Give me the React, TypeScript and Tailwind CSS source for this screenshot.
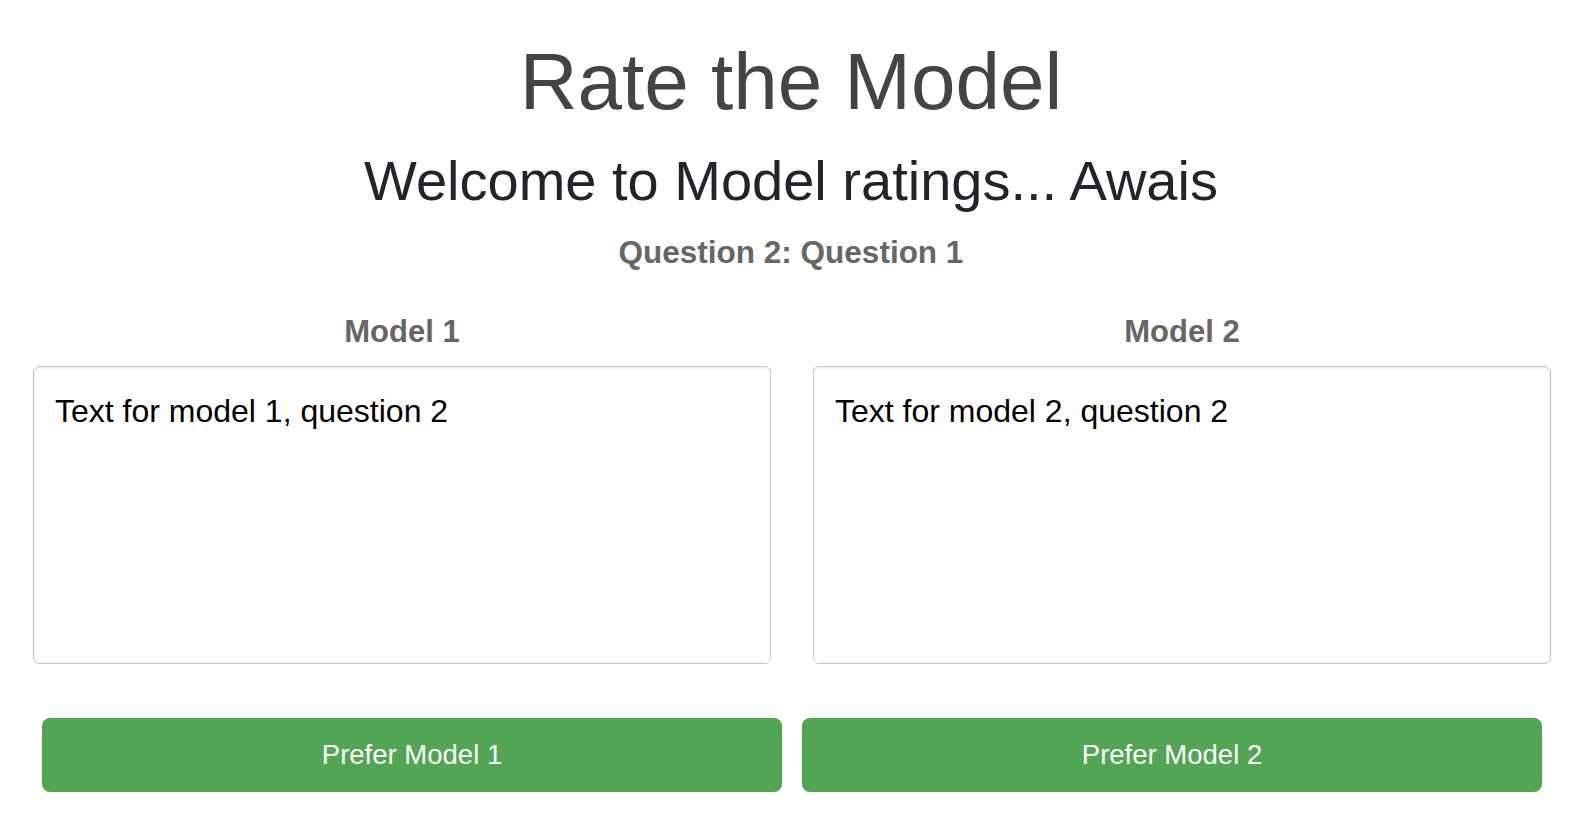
import { useState } from 'react';

const models = [
  { id: 1, text: 'Text for model 1, question 2' },
  { id: 2, text: 'Text for model 2, question 2' },
];

export default function App() {
  const [preferred, setPreferred] = useState<number | null>(null);

  return (
    <div className="min-h-screen bg-white font-['Liberation_Sans',Arial,sans-serif]">
      <h1 className="pt-[42px] text-center text-[80px] leading-[80px] text-[#444444]">
        Rate the Model
      </h1>
      <h2 className="mt-[31px] text-center text-[56px] leading-[56px] text-[#212529]">
        Welcome to Model ratings... Awais
      </h2>
      <h3 className="mt-[28px] text-center text-[31.5px] leading-[31px] font-bold text-[#666666]">
        Question 2: Question 1
      </h3>

      {/* model outputs */}
      <div className="mt-[48px] grid grid-cols-2 gap-[42px] pl-[33px] pr-[31px]">
        {models.map((m) => (
          <div key={m.id} className="flex flex-col">
            <h4 className="text-center text-[31px] leading-[31px] font-bold text-[#666666]">
              Model {m.id}
            </h4>
            <textarea
              readOnly
              value={m.text}
              className="mt-[19px] h-[298px] w-full resize-none rounded-md border border-[#c8c8c8] bg-white px-[21px] pt-[28px] text-[32px] leading-[32px] text-black shadow-[inset_0_1px_3px_rgba(0,0,0,0.1)] outline-none"
            />
          </div>
        ))}
      </div>

      {/* preference buttons */}
      <div className="mt-[54px] grid grid-cols-2 gap-5 pl-[42px] pr-[40px]">
        {models.map((m) => (
          <button
            key={m.id}
            onClick={() => setPreferred(m.id)}
            className={`flex h-[74px] items-center justify-center rounded-lg text-[27.5px] text-white ${
              preferred === m.id ? 'bg-[#479447]' : 'bg-[#52a552]'
            }`}
          >
            Prefer Model {m.id}
          </button>
        ))}
      </div>
    </div>
  );
}
